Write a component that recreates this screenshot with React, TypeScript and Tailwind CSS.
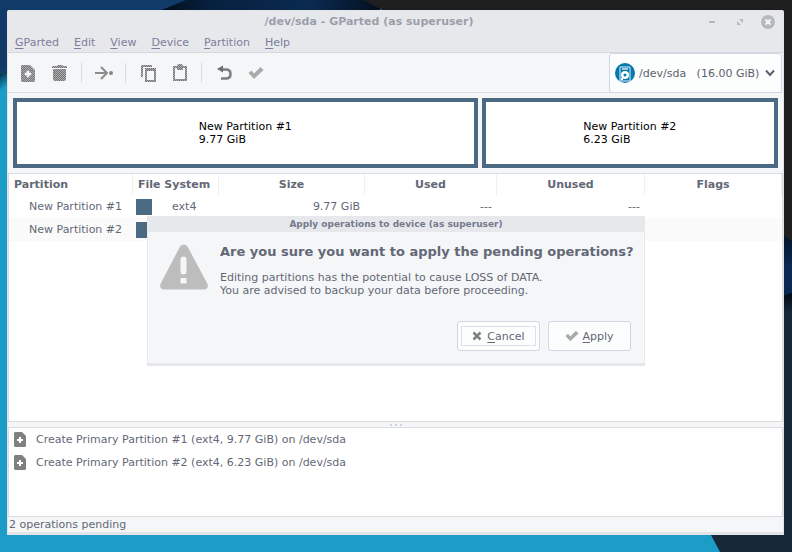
import type { ReactNode } from "react";

function Wallpaper() {
  return (
    <svg className="absolute inset-0 h-full w-full" viewBox="0 0 792 552" preserveAspectRatio="none" aria-hidden="true">
      <defs>
        <linearGradient id="navy" x1="0" y1="0" x2="1" y2="0">
          <stop offset="0" stopColor="#020a14" />
          <stop offset="0.25" stopColor="#06203f" />
          <stop offset="0.7" stopColor="#0a2a50" />
          <stop offset="1" stopColor="#04101f" />
        </linearGradient>
        <linearGradient id="leftShade" x1="0" y1="0" x2="0.3" y2="1">
          <stop offset="0" stopColor="#03101c" />
          <stop offset="0.5" stopColor="#0d5f80" />
          <stop offset="1" stopColor="#1b9dc8" />
        </linearGradient>
        <linearGradient id="rightShade" x1="0" y1="0" x2="0" y2="1">
          <stop offset="0" stopColor="#020a14" />
          <stop offset="1" stopColor="#172838" />
        </linearGradient>
        <linearGradient id="rightNavy" x1="0" y1="0" x2="0" y2="1">
          <stop offset="0" stopColor="#04152b" />
          <stop offset="0.5" stopColor="#0a2850" />
        </linearGradient>
      </defs>
      <rect width="792" height="552" fill="#1b9dc8" />
      <path d="M690 493L711 535L720 552H792V0H690Z" fill="#172838" />
      <path d="M0 0H190L160 12L8 70L0 74Z" fill="#113a69" />
      <path d="M0 74L8 70V84L0 90Z" fill="url(#leftShade)" />
      <path d="M186 0H380V14H152Z" fill="url(#navy)" />
      <path d="M363 0H792V242L784 235V12H386Z" fill="#1f1f1f" />
      <path d="M783 235L792 241V293L783 296Z" fill="url(#rightNavy)" />
      <path d="M783 296L792 293V310L783 312Z" fill="url(#rightShade)" />
    </svg>
  );
}

function Svg({ size, children }: { size: number; children: ReactNode }) {
  return (
    <svg width={size} height={size} viewBox={`0 0 ${size} ${size}`} aria-hidden="true">
      {children}
    </svg>
  );
}

/* Shared 2px checker used by the insensitive toolbar icons. */
function Stipple() {
  return (
    <svg width="0" height="0" className="absolute" aria-hidden="true">
      <defs>
        <pattern id="stipple" width="2" height="2" patternUnits="userSpaceOnUse">
          <rect width="2" height="2" fill="#acadae" />
          <rect width="1" height="1" fill="#757575" />
          <rect x="1" y="1" width="1" height="1" fill="#757575" />
        </pattern>
      </defs>
    </svg>
  );
}

const NewIcon = () => (
  <Svg size={18}>
    <path fill="url(#stipple)" d="M3 1H11L16 6V16Q16 18 15 18H3Q2 18 2 16V2Q2 1 3 1Z" />
    <path fill="#f5f6f8" d="M8 7H10V9H12V11H10V13H8V11H6V9H8Z" stroke="#f5f6f8" strokeWidth="0.5" />
  </Svg>
);
const TrashIcon = () => (
  <Svg size={18}>
    <path fill="url(#stipple)" d="M1 2H6L7 1H11L12 2H16V4H1ZM2 5H15V15Q15 17 13 17H4Q2 17 2 15Z" />
  </Svg>
);
const MoveIcon = () => (
  <Svg size={20}>
    <g fill="none" stroke="#8c8c8c" strokeWidth="2">
      <path d="M1 10H12M7 4L13 10L7 16" />
    </g>
    <circle cx="17" cy="10" r="2" fill="#858585" />
  </Svg>
);
const CopyIcon = () => (
  <Svg size={18}>
    <path fill="url(#stipple)" fillRule="evenodd" d="M3 1H13V3H4V13H2V2ZM6 4H17V18H6ZM8 7V16H15V7Z" />
    <path fill="none" stroke="#8c8c8c" strokeOpacity="0.5" d="M7.500 5.500H15.500V16.500H7.500Z" />
  </Svg>
);
const PasteIcon = () => (
  <Svg size={18}>
    <path fill="url(#stipple)" fillRule="evenodd" d="M2 2H6Q6 0 8 0H10Q12 0 12 2H16V17H2ZM4 4V15H14V4H12V6H6V4Z" />
    <path fill="none" stroke="#8c8c8c" strokeOpacity="0.5" d="M3.500 3.500V15.500H14.500V3.500" />
  </Svg>
);
const UndoIcon = () => (
  <Svg size={18}>
    <path fill="none" stroke="#7d7d7d" strokeWidth="2.500" d="M6 5.500H11Q15.500 5.500 15.500 10Q15.500 14.500 11 14.500H6" />
    <path fill="#707070" d="M2 5L8 1.500V8.500Z" />
  </Svg>
);
const CheckIcon = ({ size }: { size: number }) => (
  <svg width={size} height={size} viewBox="0 0 16 16" aria-hidden="true">
    <path d="M0.500 8L3.500 5.500L6 8.500L12.500 2L15.500 5L6 14Z" fill="#aaaaaa" />
  </svg>
);
const OperationIcon = () => (
  <svg width="12" height="15" viewBox="0 0 12 15" aria-hidden="true">
    <path fill="#808080" fillRule="evenodd" d="M1 0H8L12 4V14L11 15H1L0 14V1ZM5 5V7H3V9H5V11H7V9H9V7H7V5Z" />
  </svg>
);
const WarningIcon = () => (
  <svg className="shrink-0" width="48" height="46" viewBox="0 0 48 46" aria-hidden="true">
    <path fill="#bdbdbd" d="M20 2.500Q24-1.500 27.500 2.500L47.500 40Q49 45 44 45.500H4Q-1 45 .5 40Z" />
    <rect x="20.500" y="12.500" width="6" height="18" rx="3" fill="#f5f6f8" />
    <rect x="20.500" y="34" width="6" height="5.500" fill="#f5f6f8" />
  </svg>
);
const DiskIcon = () => (
  <Svg size={20}>
    <circle cx="10" cy="10" r="10" fill="#0479ae" />
    <path d="M5 4H15V18H5Z" fill="none" stroke="#e4f2f9" />
    <path d="M7 5H13V7H7Z" fill="#9fcde2" />
    <circle cx="10" cy="12" r="4" fill="#ffffff" />
    <circle cx="10" cy="12" r="1.500" fill="#0479ae" />
    <path d="M6 15H8V17H6Z" fill="#ffffff" />
  </Svg>
);

function ToolButton({ label, children }: { label: string; children: ReactNode }) {
  return (
    <button type="button" aria-label={label} className="flex h-8 w-8 items-center justify-center">
      {children}
    </button>
  );
}
const Separator = () => <div className="mr-1.5 ml-[5px] h-5 w-px bg-[#dadbdf]" />;

const menus = ["GParted", "Edit", "View", "Device", "Partition", "Help"];

function Mnemonic({ text }: { text: string }) {
  return (
    <span>
      <span className="underline underline-offset-2">{text[0]}</span>
      {text.slice(1)}
    </span>
  );
}

/* A row that lies behind the open dialog keeps its values but does not paint them. */
const partitions = [
  { name: "New Partition #1", fs: "ext4", size: "9.77 GiB", valueStyle: "" },
  { name: "New Partition #2", fs: "ext4", size: "6.23 GiB", valueStyle: "invisible" },
];

const columns = [
  { title: "Partition", style: "w-[124px] pl-[5px] text-left" },
  { title: "File System", style: "w-[86px] pl-[5px] text-left" },
  { title: "Size", style: "w-[146px] text-center" },
  { title: "Used", style: "w-[132px] text-center" },
  { title: "Unused", style: "w-[148px] text-center" },
  { title: "Flags", style: "text-center" },
];

function TitleBar() {
  return (
    <header className="flex h-[21px] items-center pr-px pl-8">
      <h1 className="flex-1 text-center font-bold text-[#9a9fac]">/dev/sda - GParted (as superuser)</h1>
      <div className="flex text-[#b6b8be]">
        <button type="button" aria-label="Minimize" className="flex w-7 justify-center">
          <Svg size={14}><path d="M4 6H10V8H4Z" fill="currentColor" /></Svg>
        </button>
        <button type="button" aria-label="Restore" className="flex w-7 justify-center">
          <Svg size={14}><path d="M6 4H10V8ZM4 6V10H8Z" fill="currentColor" /></Svg>
        </button>
        <button type="button" aria-label="Close" className="flex w-7 justify-center">
          <Svg size={14}>
            <circle cx="7" cy="7" r="7" fill="currentColor" />
            <path d="M4.500 4.500L9.500 9.500M9.500 4.500L4.500 9.500" stroke="#f4f5f7" strokeWidth="2" />
          </Svg>
        </button>
      </div>
    </header>
  );
}

function Toolbar() {
  return (
    <div className="flex h-10 items-center border-b border-[#dcdfe8] pr-px pl-1">
      <ToolButton label="New"><NewIcon /></ToolButton>
      <ToolButton label="Delete"><TrashIcon /></ToolButton>
      <Separator />
      <ToolButton label="Resize/Move"><MoveIcon /></ToolButton>
      <Separator />
      <ToolButton label="Copy"><CopyIcon /></ToolButton>
      <ToolButton label="Paste"><PasteIcon /></ToolButton>
      <Separator />
      <ToolButton label="Undo"><UndoIcon /></ToolButton>
      <ToolButton label="Apply all operations"><CheckIcon size={16} /></ToolButton>
      <div className="relative -mb-px ml-auto h-10">
        <select
          aria-label="Device"
          className="h-full w-[173px] appearance-none rounded-[3px] border border-[#cfd6e6] bg-[#fcfdfd] pl-[29px] text-[#5c616c]"
        >
          <option>{"/dev/sda\u00a0\u00a0\u00a0(16.00 GiB)"}</option>
        </select>
        <span className="pointer-events-none absolute inset-y-0 left-1.5 flex items-center"><DiskIcon /></span>
        <span className="pointer-events-none absolute inset-y-0 right-[7px] flex items-center">
          <svg width="10" height="8" viewBox="0 0 10 8" aria-hidden="true">
            <path d="M1 1.500L5 6L9 1.500" fill="none" stroke="#5c616c" strokeWidth="2" />
          </svg>
        </span>
      </div>
    </div>
  );
}

function PartitionTable() {
  return (
    <section className="flex-1 border border-[#dbdcdf] bg-white">
      <table className="w-full table-fixed border-separate border-spacing-0">
        <thead>
          <tr className="h-[21px]">
            {columns.map((c) => (
              <th key={c.title} scope="col" className={`border-r border-[#f0f0f2] py-0 pr-0 font-bold ${c.style}`}>
                {c.title}
              </th>
            ))}
          </tr>
        </thead>
        <tbody>
          {partitions.map((p) => (
            <tr key={p.name} className="h-[23px] even:bg-[#fafafa]">
              <td className="p-0 pl-5 whitespace-nowrap">{p.name}</td>
              <td className="p-0">
                <div className="flex items-center gap-5 pl-[3px]">
                  <span className="h-4 w-4 bg-[#4b6983]" />
                  <span className={p.valueStyle}>{p.fs}</span>
                </div>
              </td>
              <td className={`p-0 pr-[5px] text-right ${p.valueStyle}`}>{p.size}</td>
              <td className={`p-0 pr-[5px] text-right ${p.valueStyle}`}>---</td>
              <td className={`p-0 pr-[5px] text-right ${p.valueStyle}`}>---</td>
              <td className="p-0" />
            </tr>
          ))}
        </tbody>
      </table>
    </section>
  );
}

function ApplyDialog() {
  return (
    <div
      role="dialog"
      aria-labelledby="dialog-title"
      className="absolute top-[216px] left-1/2 w-[498px] -translate-x-1/2 border border-b-[3px] border-[#e7e8eb] bg-[#f5f6f8]"
    >
      <h2 id="dialog-title" className="h-[15px] bg-[#e7e8eb] text-center text-[9px] leading-[14px] font-bold text-[#747a8e]">
        Apply operations to device (as superuser)
      </h2>
      <div className="flex gap-3 px-3 pt-3">
        <WarningIcon />
        <div className="flex-1 whitespace-nowrap">
          <p className="text-[13px] leading-4 font-bold">Are you sure you want to apply the pending operations?</p>
          <p className="mt-[11px]">
            Editing partitions has the potential to cause LOSS of DATA.
            <br />
            You are advised to backup your data before proceeding.
          </p>
        </div>
      </div>
      <div className="mt-6 flex justify-end gap-2 px-[13px] pb-3">
        <button type="button" className="h-[30px] w-[83px] rounded-[3px] border border-[#cfd6e6] bg-[#fcfdfd] px-[3px]">
          <span className="flex h-5 items-center justify-center gap-[5px] border border-[#dcdfec]">
            <Svg size={10}><path d="M1.500 1.500L8.500 8.500M8.500 1.500L1.500 8.500" stroke="#808080" strokeWidth="2.500" /></Svg>
            <Mnemonic text="Cancel" />
          </span>
        </button>
        <button type="button" className="flex h-[30px] w-[83px] items-center justify-center gap-[3px] rounded-[3px] border border-[#cfd6e6] bg-[#fcfdfd]">
          <CheckIcon size={14} />
          <Mnemonic text="Apply" />
        </button>
      </div>
    </div>
  );
}

export default function App() {
  return (
    <div className="relative flex min-h-screen flex-col pt-2.5 pr-2 pb-[17px] pl-[7px] font-['DejaVu_Sans',sans-serif] text-[11px] leading-[13px] text-[#636876]">
      <Wallpaper />
      <Stipple />
      <main className="relative flex flex-1 flex-col rounded-t-[2px] border border-b-[3px] border-[#e3e4e7] bg-[#f5f6f8]">
        <div className="border-b border-[#d5d7dd] bg-[#e7e8eb]">
          <TitleBar />
          <nav className="flex h-5 items-center gap-px text-[#7b7f9c]">
            {menus.map((m) => (
              <button key={m} type="button" className="px-[7px]">
                <Mnemonic text={m} />
              </button>
            ))}
          </nav>
        </div>
        <Toolbar />
        <section aria-label="Disk layout" className="grid grid-cols-[977fr_623fr] gap-1 p-[5px]">
          {partitions.map((p) => (
            <div key={p.name} className="flex h-[70px] items-center justify-center border-4 border-[#4b6983] bg-white text-black">
              <p>
                {p.name}
                <br />
                {p.size}
              </p>
            </div>
          ))}
        </section>
        <PartitionTable />
        <div className="flex h-[5px] items-center justify-center gap-[3px]">
          <span className="h-0.5 w-0.5 bg-[#cbd2e3]" />
          <span className="h-0.5 w-0.5 bg-[#cbd2e3]" />
          <span className="h-0.5 w-0.5 bg-[#cbd2e3]" />
        </div>
        <ul aria-label="Pending operations" className="h-[90px] border border-[#dbdcdf] bg-white">
          {partitions.map((p, i) => (
            <li key={p.name} className="flex h-[23px] items-center gap-2.5 pl-[5px]">
              <OperationIcon />
              Create Primary Partition #{i + 1} ({p.fs}, {p.size}) on /dev/sda
            </li>
          ))}
        </ul>
        <footer className="h-[15px] pl-px leading-[15px]">2 operations pending</footer>
      </main>
      <ApplyDialog />
    </div>
  );
}
